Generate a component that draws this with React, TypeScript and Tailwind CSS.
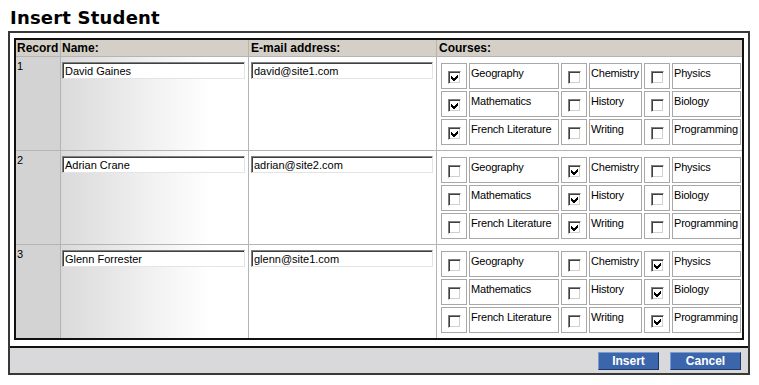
import { Fragment } from 'react';

type Student = {
  id: number;
  name: string;
  email: string;
  courses: string[];
};

const courseGrid = [
  ['Geography', 'Chemistry', 'Physics'],
  ['Mathematics', 'History', 'Biology'],
  ['French Literature', 'Writing', 'Programming'],
];

const students: Student[] = [
  { id: 1, name: 'David Gaines', email: 'david@site1.com', courses: ['Geography', 'Mathematics', 'French Literature'] },
  { id: 2, name: 'Adrian Crane', email: 'adrian@site2.com', courses: ['Chemistry', 'History', 'Writing'] },
  { id: 3, name: 'Glenn Forrester', email: 'glenn@site1.com', courses: ['Physics', 'Biology', 'Programming'] },
];

function Checkbox({ checked }: { checked: boolean }) {
  return (
    <span className="relative block h-[13px] w-[13px] border border-t-[#808080] border-l-[#808080] border-r-white border-b-white bg-white shadow-[inset_1px_1px_0_#404040,inset_-1px_-1px_0_#d4d0c8]">
      {checked && (
        <svg
          className="absolute left-[2px] top-[2px]"
          width="7"
          height="7"
          viewBox="0 0 7 7"
          shapeRendering="crispEdges"
          aria-hidden
        >
          <polygon points="0,2 2.5,4.5 7,0 7,3 2.5,7.5 0,5" fill="#000" />
        </svg>
      )}
    </span>
  );
}

function TextBox({ value, width }: { value: string; width: string }) {
  return (
    <div
      className={`${width} h-[17px] border border-t-[#808080] border-l-[#808080] border-r-[#e4e4e4] border-b-[#e4e4e4] bg-white pl-[2px] text-[11px] leading-[16px] shadow-[inset_1px_1px_0_#404040]`}
    >
      {value}
    </div>
  );
}

function CourseGrid({ selected }: { selected: string[] }) {
  return (
    <div className="grid grid-cols-[26px_90px_26px_53px_26px_69px] grid-rows-[26px_26px_26px] gap-[2px]">
      {courseGrid.map((row) =>
        row.map((course) => (
          <Fragment key={course}>
            <div className="flex justify-center border border-[#a8a8a8] pt-[7px]">
              <Checkbox checked={selected.includes(course)} />
            </div>
            <div className="overflow-hidden whitespace-nowrap border border-[#a8a8a8] pl-[1px] pt-[3px] leading-[13px] tracking-[-0.2px]">
              {course}
            </div>
          </Fragment>
        )),
      )}
    </div>
  );
}

export default function App() {
  return (
    <div className="h-[385px] w-[759px] bg-white font-['Liberation_Sans',Arial,sans-serif] text-[11px] text-black">
      <h1 className="mb-[2px] ml-[10px] pt-[7px] font-['DejaVu_Sans',Verdana,sans-serif] text-[18px] font-bold leading-[22px] tracking-[0.2px]">
        Insert Student
      </h1>

      <div className="ml-[8px] w-[742px] border-2 border-[#383838]">
        <div className="pb-[6px] pl-[4px] pr-[4px] pt-[5px]">
          <div className="w-[730px] border-2 border-[#111]">
            <div className="flex h-[17px] border-b border-[#b4b4b4] bg-[#d4d0c8] text-[12px] font-bold leading-[16px]">
              <div className="w-[45px] border-r border-[#b4b4b4] pl-[1px]">Record</div>
              <div className="w-[188px] border-r border-[#b4b4b4] pl-[1px]">Name:</div>
              <div className="w-[188px] border-r border-[#b4b4b4] pl-[2px]">E-mail address:</div>
              <div className="flex-1 pl-[2px]">Courses:</div>
            </div>

            {students.map((s, i) => (
              <div
                key={s.id}
                className={`flex ${i < students.length - 1 ? 'h-[94px] border-b border-[#b4b4b4]' : 'h-[93px]'}`}
              >
                <div className="w-[45px] border-r border-[#b4b4b4] bg-[#d3d3d3] pl-[1px] pt-[3px] leading-[13px]">
                  {s.id}
                </div>
                <div className="w-[188px] border-r border-[#b4b4b4] bg-[linear-gradient(to_right,#dadada,#f2f2f2_50%,#ffffff_80%)] pl-[1px] pt-[5px]">
                  <TextBox value={s.name} width="w-[183px]" />
                </div>
                <div className="w-[188px] border-r border-[#b4b4b4] pl-[2px] pt-[5px]">
                  <TextBox value={s.email} width="w-[182px]" />
                </div>
                <div className="flex-1 pl-[4px] pt-[6px]">
                  <CourseGrid selected={s.courses} />
                </div>
              </div>
            ))}
          </div>
        </div>

        <div className="flex h-[27px] items-center justify-end gap-[11px] border-t-2 border-[#111] bg-[#d9d9dc] pr-[7px]">
          <button className="h-[18px] w-[61px] border border-t-[#7b9bd2] border-l-[#7b9bd2] border-r-[#1d3768] border-b-[#1d3768] bg-[#3b66ab] text-[12px] font-bold leading-[16px] text-white">
            Insert
          </button>
          <button className="h-[18px] w-[71px] border border-t-[#7b9bd2] border-l-[#7b9bd2] border-r-[#1d3768] border-b-[#1d3768] bg-[#3b66ab] text-[12px] font-bold leading-[16px] text-white">
            Cancel
          </button>
        </div>
      </div>
    </div>
  );
}
